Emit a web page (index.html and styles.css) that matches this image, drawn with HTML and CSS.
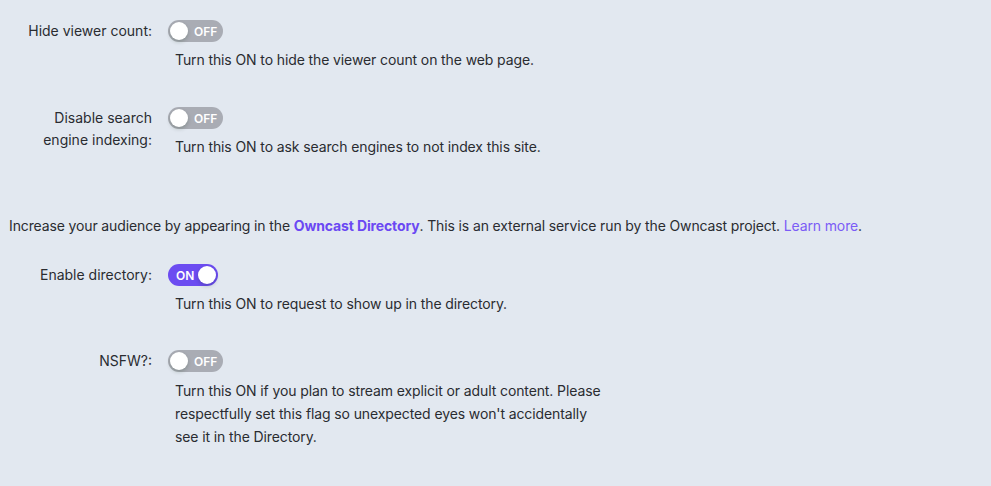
FILE: index.html
```html
<!DOCTYPE html>
<html>
<head>
<meta charset="utf-8">
<link rel="stylesheet" href="styles.css">
</head>
<body>
<div class="page">
  <div class="row row-1">
    <div class="label">Hide viewer count:</div>
    <div class="control">
      <button class="switch off"><span class="handle"></span><span class="inner">OFF</span></button>
      <div class="help">Turn this ON to hide the viewer count on the web page.</div>
    </div>
  </div>
  <div class="row row-2">
    <div class="label">Disable search<br>engine indexing:</div>
    <div class="control">
      <button class="switch off"><span class="handle"></span><span class="inner">OFF</span></button>
      <div class="help">Turn this ON to ask search engines to not index this site.</div>
    </div>
  </div>
  <p class="intro">Increase your audience by appearing in the <a class="strong-link" href="#">Owncast Directory</a>. This is an external service run by the Owncast project. <a class="link" href="#">Learn more</a>.</p>
  <div class="row row-3">
    <div class="label">Enable directory:</div>
    <div class="control">
      <button class="switch on"><span class="inner">ON</span><span class="handle"></span></button>
      <div class="help">Turn this ON to request to show up in the directory.</div>
    </div>
  </div>
  <div class="row row-4">
    <div class="label">NSFW?:</div>
    <div class="control">
      <button class="switch off"><span class="handle"></span><span class="inner">OFF</span></button>
      <div class="help help-long">Turn this ON if you plan to stream explicit or adult content. Please respectfully set this flag so unexpected eyes won't accidentally see it in the Directory.</div>
    </div>
  </div>
</div>
</body>
</html>
```

FILE: styles.css
```css
html, body {
  margin: 0;
  padding: 0;
  background: #e2e8f0;
}
body {
  font-family: Inter, "Noto Sans", sans-serif;
  font-size: 14px;
  line-height: 22px;
  color: #2a2c31;
}
.page {
  padding: 20px 8px 0 9px;
}
.row {
  display: grid;
  grid-template-columns: 143px 1fr;
  column-gap: 16px;
}
.row-2 { margin-top: 36px; }
.row-3 { margin-top: 27px; }
.row-4 { margin-top: 35px; }
.label {
  text-align: right;
}
.control {
  display: flex;
  flex-direction: column;
  align-items: flex-start;
}
.switch {
  display: inline-flex;
  align-items: center;
  height: 22px;
  border: none;
  border-radius: 11px;
  padding: 0 2px;
  margin: 0;
  font-family: Inter, "Noto Sans", sans-serif;
  font-size: 12px;
  font-weight: 600;
  color: #fff;
  cursor: pointer;
}
.switch.off {
  background: #a9acb4;
  width: 55px;
}
.switch.on {
  background: #6c4cf1;
  width: 50px;
  justify-content: space-between;
}
.handle {
  width: 18px;
  height: 18px;
  border-radius: 50%;
  background: #fff;
  box-shadow: 0 2px 4px rgba(0, 35, 11, 0.2);
  flex: none;
}
.switch.off .inner { margin-left: 6px; }
.switch.on .inner { margin-left: 6px; }
.help {
  margin: 7px 0 0 7px;
  max-width: 432px;
  letter-spacing: -0.11px;
}
.help-long {
  line-height: 23px;
}
.intro {
  margin: 57px 0 0 0;
  letter-spacing: -0.13px;
}
.strong-link {
  color: #6b48f3;
  font-weight: 700;
  text-decoration: none;
}
.link {
  color: #7b5cf6;
  text-decoration: none;
}
```
